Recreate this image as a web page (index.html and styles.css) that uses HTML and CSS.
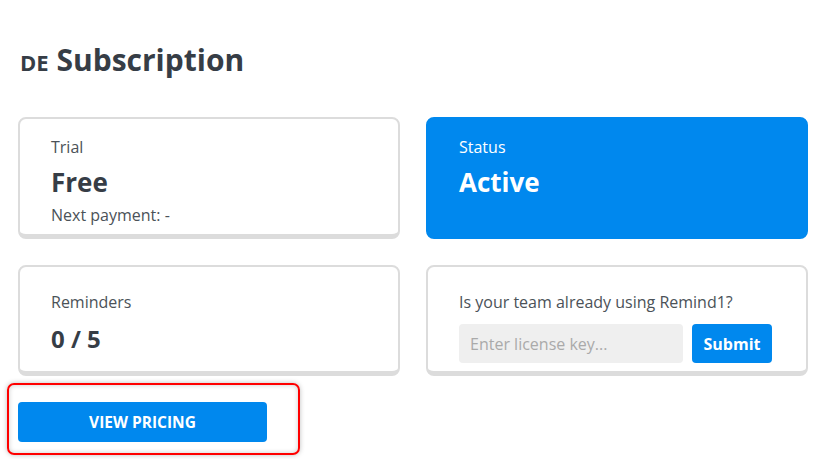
FILE: index.html
```html
<!DOCTYPE html>
<html>
<head>
<meta charset="utf-8">
<link rel="stylesheet" href="styles.css">
</head>
<body>
<div class="page">
  <h1 class="title"><span class="lang">DE</span> Subscription</h1>
  <div class="grid">
    <div class="card card-top">
      <div class="label">Trial</div>
      <div class="value">Free</div>
      <div class="label">Next payment: -</div>
    </div>
    <div class="card card-top card-blue">
      <div class="label">Status</div>
      <div class="value">Active</div>
    </div>
    <div class="card card-bottom">
      <div class="label">Reminders</div>
      <div class="value value-sm">0 / 5</div>
    </div>
    <div class="card card-bottom">
      <div class="label">Is your team already using Remind1?</div>
      <div class="license">
        <input class="license-input" type="text" placeholder="Enter license key...">
        <button class="btn btn-submit">Submit</button>
      </div>
    </div>
  </div>
  <div class="pricing">
    <button class="btn btn-pricing">VIEW PRICING</button>
    <div class="highlight"></div>
  </div>
</div>
</body>
</html>
```

FILE: styles.css
```css
* { box-sizing: border-box; }
html, body { margin: 0; padding: 0; background: #fff; }
body {
  font-family: "Open Sans", "Liberation Sans", sans-serif;
  color: #3a4149;
}
.page {
  width: 790px;
  margin-left: 18px;
  padding-top: 38px;
  padding-bottom: 18px;
}
.title {
  margin: 0 0 0 2px;
  font-size: 30px;
  font-weight: 700;
  line-height: 44px;
  color: #363d46;
}
.lang {
  font-size: 22px;
}
.grid {
  margin-top: 33px;
  display: grid;
  grid-template-columns: 1fr 1fr;
  column-gap: 26px;
  row-gap: 26px;
}
.card {
  border: 2px solid #dcdcdc;
  border-bottom-width: 5px;
  border-radius: 8px;
  padding: 17px 31px 8px;
  background: #fff;
}
.card-bottom {
  padding-top: 24px;
  padding-bottom: 8px;
}
.card-blue {
  background: #0088ee;
  border-color: #0088ee;
  color: #fff;
}
.card-blue .label, .card-blue .value { color: #fff; }
.label {
  font-size: 16px;
  line-height: 22px;
  color: #4b5258;
}
.value {
  font-size: 26px;
  font-weight: 700;
  line-height: 44px;
  margin-top: 2px;
  color: #363d46;
}
.value-sm {
  font-size: 24px;
  line-height: 40px;
  margin-top: 6px;
}
.license {
  margin-top: 11px;
  display: flex;
  gap: 9px;
}
.license-input {
  width: 224px;
  height: 39px;
  border: none;
  border-radius: 4px;
  background: #efefef;
  padding: 0 11px;
  font-family: inherit;
  font-size: 16px;
  color: #333;
  outline: none;
}
.license-input::placeholder { color: #aaaaaa; }
.btn {
  border: none;
  background: #0088ee;
  color: #fff;
  font-family: inherit;
  font-weight: 700;
  border-radius: 4px;
  cursor: pointer;
}
.btn-submit {
  width: 80px;
  height: 39px;
  font-size: 16px;
}
.pricing {
  position: relative;
  margin-top: 26px;
  width: 249px;
}
.btn-pricing {
  display: block;
  width: 249px;
  height: 40px;
  font-size: 15.5px;
}
.highlight {
  position: absolute;
  left: -11px;
  top: -19px;
  right: -33px;
  bottom: -13px;
  border: 2px solid #f00;
  border-radius: 7px;
  box-shadow: 0 0 5px rgba(0,0,0,0.25), inset 0 0 5px rgba(0,0,0,0.2);
  pointer-events: none;
}
```
